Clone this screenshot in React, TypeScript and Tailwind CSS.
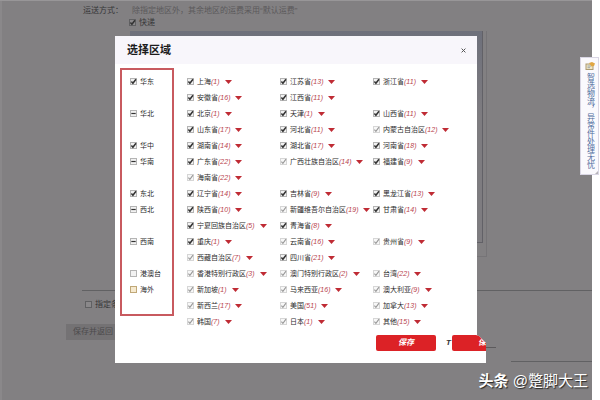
import clsx from "clsx";

type Area = { name: string; count: number; dim?: boolean };
type Region = {
  name: string;
  state: "on" | "mixed" | "off";
  focus?: boolean;
  areas: Area[];
};

const regions: Region[] = [
  {
    name: "华东",
    state: "on",
    areas: [
      { name: "上海", count: 1 },
      { name: "江苏省", count: 13 },
      { name: "浙江省", count: 11 },
      { name: "安徽省", count: 16 },
      { name: "江西省", count: 11 },
    ],
  },
  {
    name: "华北",
    state: "mixed",
    areas: [
      { name: "北京", count: 1 },
      { name: "天津", count: 1 },
      { name: "山西省", count: 11 },
      { name: "山东省", count: 17 },
      { name: "河北省", count: 11 },
      { name: "内蒙古自治区", count: 12, dim: true },
    ],
  },
  {
    name: "华中",
    state: "on",
    areas: [
      { name: "湖南省", count: 14 },
      { name: "湖北省", count: 17 },
      { name: "河南省", count: 18 },
    ],
  },
  {
    name: "华南",
    state: "mixed",
    areas: [
      { name: "广东省", count: 22 },
      { name: "广西壮族自治区", count: 14, dim: true },
      { name: "福建省", count: 9 },
      { name: "海南省", count: 22, dim: true },
    ],
  },
  {
    name: "东北",
    state: "on",
    areas: [
      { name: "辽宁省", count: 14 },
      { name: "吉林省", count: 9 },
      { name: "黑龙江省", count: 13 },
    ],
  },
  {
    name: "西北",
    state: "mixed",
    areas: [
      { name: "陕西省", count: 10 },
      { name: "新疆维吾尔自治区", count: 19, dim: true },
      { name: "甘肃省", count: 14 },
      { name: "宁夏回族自治区", count: 5 },
      { name: "青海省", count: 8 },
    ],
  },
  {
    name: "西南",
    state: "mixed",
    areas: [
      { name: "重庆", count: 1 },
      { name: "云南省", count: 16, dim: true },
      { name: "贵州省", count: 9, dim: true },
      { name: "西藏自治区", count: 7, dim: true },
      { name: "四川省", count: 21 },
    ],
  },
  {
    name: "港澳台",
    state: "off",
    areas: [
      { name: "香港特别行政区", count: 3, dim: true },
      { name: "澳门特别行政区", count: 2, dim: true },
      { name: "台湾", count: 22, dim: true },
    ],
  },
  {
    name: "海外",
    state: "off",
    focus: true,
    areas: [
      { name: "新加坡", count: 1, dim: true },
      { name: "马来西亚", count: 16, dim: true },
      { name: "澳大利亚", count: 9, dim: true },
      { name: "新西兰", count: 17, dim: true },
      { name: "美国", count: 51, dim: true },
      { name: "加拿大", count: 13, dim: true },
      { name: "韩国", count: 7, dim: true },
      { name: "日本", count: 1, dim: true },
      { name: "其他", count: 15, dim: true },
    ],
  },
];

interface TickProps {
  id: string;
  state: "on" | "mixed" | "off";
  dim?: boolean;
  focus?: boolean;
  onPage?: boolean;
}

function Tick({ id, state, dim, focus, onPage }: TickProps) {
  return (
    <span className="relative -mt-0.5 block size-[7px] shrink-0">
      <input
        id={id}
        type="checkbox"
        defaultChecked={state === "on"}
        className={clsx(
          "block size-[7px] appearance-none border",
          focus && "border-[#c0a878] bg-[#f6ead0]",
          onPage && "border-[#606062] bg-[#8a888a]",
          !focus && !onPage && (dim ? "border-[#d6d6d6] bg-[#f7f7f7]" : "border-[#b4b4b4] bg-[#f2f2f2]")
        )}
      />
      {state !== "off" && (
        <svg
          viewBox="0 0 7 7"
          fill="none"
          className={clsx(
            "pointer-events-none absolute inset-0 size-[7px]",
            dim ? "stroke-[#999]" : "stroke-[#333]"
          )}
        >
          {state === "on" ? (
            <path d="M1.4 3.6 L2.9 5.3 L6 1.2" strokeWidth={dim ? 1.1 : 1.5} />
          ) : (
            <path d="M1.3 3.5 H5.7" strokeWidth="1.2" />
          )}
        </svg>
      )}
    </span>
  );
}

function AreaItem({ area, id }: { area: Area; id: string }) {
  return (
    <div className="flex h-4 items-center whitespace-nowrap">
      <Tick id={id} state="on" dim={area.dim} />
      <label htmlFor={id} className="ml-[3px] text-[#2c2c2c]">
        {area.name}
        <i className="text-[#b8434e]">({area.count})</i>
      </label>
      <button type="button" aria-label={`展开${area.name}`} className="ml-[5px]">
        <svg viewBox="0 0 7 4" className="h-1 w-[7px] fill-[#bf2b34]">
          <path d="M0 0 H7 L3.5 4 Z" />
        </svg>
      </button>
    </div>
  );
}

function RegionRow({ region, index }: { region: Region; index: number }) {
  const id = `region-${index}`;
  return (
    <div className="flex">
      <div className="flex h-4 w-[57px] shrink-0 items-center">
        <Tick id={id} state={region.state} focus={region.focus} />
        <label htmlFor={id} className="ml-[3px] text-[#2c2c2c]">
          {region.name}
        </label>
      </div>
      <div className="grid grow grid-cols-[repeat(3,93px)]">
        {region.areas.map((area, i) => (
          <AreaItem key={area.name} area={area} id={`${id}-${i}`} />
        ))}
      </div>
    </div>
  );
}

function RegionDialog() {
  return (
    <section role="dialog" aria-labelledby="dialog-title" className="w-[362px] bg-white">
      <header className="flex h-7 items-center justify-between bg-[#f8f6fb] pl-3">
        <h2 id="dialog-title" className="text-[11px] leading-4 font-bold text-[#1c1c1c]">
          选择区域
        </h2>
        <button type="button" aria-label="关闭" className="flex h-7 w-7 items-center justify-center">
          <svg viewBox="0 0 6 6" className="size-[5px] stroke-[#555]">
            <path d="M0.7 0.7 L5.3 5.3 M5.3 0.7 L0.7 5.3" strokeWidth="1.2" />
          </svg>
        </button>
      </header>

      <div className="relative pt-[10px] pl-[15px]">
        {regions.map((region, index) => (
          <RegionRow key={region.name} region={region} index={index} />
        ))}
        {/* Highlight around the region column */}
        <div className="pointer-events-none absolute top-[4px] left-[5px] h-[248px] w-[54px] border-2 border-[#c85a5f]" />
      </div>

      {/* Footer runs past the right edge of the dialog */}
      <footer className="-mr-[9px] flex h-[33px] items-start bg-white pt-[5px] pl-[261px] [clip-path:polygon(0_0,361px_0,361px_5px,364px_6px,371px_13px,371px_100%,0_100%)]">
        <button
          type="button"
          className="h-4 w-[60px] shrink-0 rounded-xs bg-[#dc2226] text-[8px] leading-4 font-bold text-white italic"
        >
          保存
        </button>
        <span className="ml-[10px] w-[6px] shrink-0 text-[8px] leading-4 font-bold text-[#333] italic">T</span>
        <button
          type="button"
          aria-label="保存"
          className="h-4 w-[34px] shrink-0 rounded-l-xs bg-[#dc2226] text-right text-[8px] leading-4 font-bold text-white italic"
        >
          保
        </button>
      </footer>
    </section>
  );
}

function ShippingForm() {
  return (
    <form className="grow border-l-2 border-[#8a888a] pt-1 text-[#363638]">
      <div className="flex pl-[81px] text-[8px] leading-[11px]">
        <span className="w-[49px]">运送方式：</span>
        <p className="text-[#5b595b]">除指定地区外，其余地区的运费采用“默认运费”</p>
      </div>
      <div className="flex h-[14px] items-center pl-[127px] text-[8px]">
        <Tick id="express" state="on" onPage />
        <label htmlFor="express" className="ml-[3px]">
          快递
        </label>
      </div>
      <div className="mt-px mr-[105px] ml-32 h-[226px] border-r border-b border-[#767477] pr-[3px]">
        <div className="h-[212px] border-r border-b border-[#626167] bg-gradient-to-b from-[#6e707b] to-[#7e7c80] to-40%" />
      </div>
      <hr className="mt-[33px] ml-20 border-[#616163]" />
      <div className="flex h-7 items-center pl-[83px] text-[8px]">
        <Tick id="free" state="off" onPage />
        <label htmlFor="free" className="ml-[3px]">
          指定条件包邮
        </label>
      </div>
      <button
        type="button"
        className="mt-[5px] ml-16 block h-4 w-[58px] bg-[#747274] pl-[7px] text-left text-[8px] leading-4 text-[#4c4a4c]"
      >
        保存并返回
      </button>
      <div className="flex h-[21px] items-start justify-end pt-[7px]">
        <hr className="mr-24 w-[14px] border-[#5c5a5c]" />
      </div>
      <hr className="ml-auto w-[81px] border-[#616163]" />
    </form>
  );
}

function SideTab() {
  return (
    <a
      href="#"
      className="absolute top-[57px] right-[1px] flex h-[118px] w-[19px] flex-col items-center border border-[#d9d6e4] bg-[#faf9fd] pt-1 text-[8px] leading-[10px] text-[#4d6b9c]"
    >
      <svg viewBox="0 0 10 8" className="mb-[3px] h-2 w-[10px] shrink-0">
        <rect x="1" y="2" width="7" height="5.5" fill="#f1e6c4" stroke="#ab9a72" />
        <path d="M2.5 4 H6 M2.5 5.7 H5" stroke="#8795a8" strokeWidth="0.8" />
        <path d="M4 1 L7 0 L10 1.5 L9 4 L6.5 4.5 Z" fill="#e0a643" />
      </svg>
      <span className="whitespace-nowrap [writing-mode:vertical-rl]">智选物流，异常件处理无忧</span>
      <svg viewBox="0 0 3 3" className="absolute right-0 bottom-0 size-[3px] fill-[#b5b3b8]">
        <path d="M3 0 V3 H0 Z" />
      </svg>
    </a>
  );
}

export default function App() {
  return (
    <div className="relative flex min-h-screen bg-white font-['Liberation_Sans','Noto_Sans_CJK_SC',sans-serif] text-[7px] leading-[10px]">
      <main className="relative flex grow border-t border-[#989698] bg-[#828082]">
        <ShippingForm />
        <div className="absolute inset-x-0 top-[35px] flex justify-center">
          <RegionDialog />
        </div>
        <p className="absolute right-1 bottom-[9px] text-[15px] leading-5 whitespace-nowrap text-white [text-shadow:1px_1px_1px_#222]">
          <b>头条</b> @蹩脚大王
        </p>
      </main>
      <div className="w-2 shrink-0 bg-white" />
      <SideTab />
    </div>
  );
}
